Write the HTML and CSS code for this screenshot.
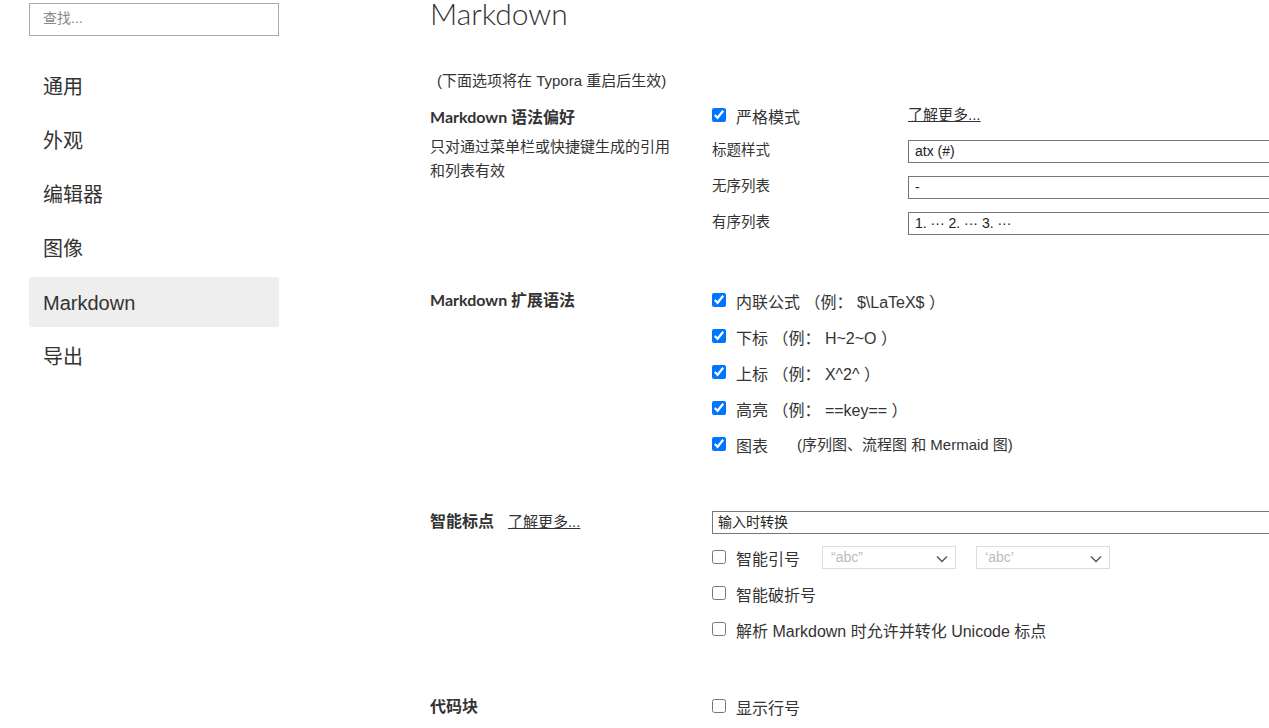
FILE: index.html
```html
<!DOCTYPE html>
<html lang="zh">
<head>
<meta charset="utf-8">
<title>偏好设置</title>
<link rel="stylesheet" href="styles.css">
</head>
<body>
<div class="page">
  <aside class="sidebar">
    <div class="search">查找...</div>
    <nav class="nav">
      <div class="nav-item">通用</div>
      <div class="nav-item">外观</div>
      <div class="nav-item">编辑器</div>
      <div class="nav-item">图像</div>
      <div class="nav-item active">Markdown</div>
      <div class="nav-item">导出</div>
    </nav>
  </aside>
  <main class="main">
    <h1 class="title">Markdown</h1>
    <div class="note">(下面选项将在 Typora 重启后生效)</div>

    <section class="section lead">
      <div class="label-col">
        <div class="sec-label">Markdown 语法偏好</div>
        <div class="sec-desc">只对通过菜单栏或快捷键生成的引用和列表有效</div>
      </div>
      <div class="opt-col">
        <div class="row grid2">
          <label class="check"><input type="checkbox" checked><span>严格模式</span></label>
          <a class="link">了解更多...</a>
        </div>
        <div class="row grid2 small">
          <span class="sub">标题样式</span>
          <div class="field">atx (#)</div>
        </div>
        <div class="row grid2 small">
          <span class="sub">无序列表</span>
          <div class="field">-</div>
        </div>
        <div class="row grid2 small">
          <span class="sub">有序列表</span>
          <div class="field">1. ··· 2. ··· 3. ···</div>
        </div>
      </div>
    </section>

    <section class="section">
      <div class="label-col">
        <div class="sec-label">Markdown 扩展语法</div>
      </div>
      <div class="opt-col">
        <div class="row"><label class="check"><input type="checkbox" checked><span>内联公式 （例： $\LaTeX$ ）</span></label></div>
        <div class="row"><label class="check"><input type="checkbox" checked><span>下标 （例： H~2~O ）</span></label></div>
        <div class="row"><label class="check"><input type="checkbox" checked><span>上标 （例： X^2^ ）</span></label></div>
        <div class="row"><label class="check"><input type="checkbox" checked><span>高亮 （例： ==key== ）</span></label></div>
        <div class="row"><label class="check"><input type="checkbox" checked><span>图表</span></label><span class="hint">(序列图、流程图 和 Mermaid 图)</span></div>
      </div>
    </section>

    <section class="section">
      <div class="label-col">
        <div class="sec-label">智能标点 <a class="link small-link">了解更多...</a></div>
      </div>
      <div class="opt-col">
        <div class="row"><div class="field wide">输入时转换</div></div>
        <div class="row">
          <label class="check"><input type="checkbox"><span>智能引号</span></label>
          <div class="select first">“abc”<svg class="chev" width="12" height="8" viewBox="0 0 12 8"><path d="M1 1.5l5 5 5-5" fill="none" stroke="#555" stroke-width="1.4"/></svg></div>
          <div class="select">‘abc’<svg class="chev" width="12" height="8" viewBox="0 0 12 8"><path d="M1 1.5l5 5 5-5" fill="none" stroke="#555" stroke-width="1.4"/></svg></div>
        </div>
        <div class="row"><label class="check"><input type="checkbox"><span>智能破折号</span></label></div>
        <div class="row"><label class="check"><input type="checkbox"><span>解析 Markdown 时允许并转化 Unicode 标点</span></label></div>
      </div>
    </section>

    <section class="section">
      <div class="label-col">
        <div class="sec-label">代码块</div>
      </div>
      <div class="opt-col">
        <div class="row"><label class="check"><input type="checkbox"><span>显示行号</span></label></div>
      </div>
    </section>
  </main>
</div>
</body>
</html>
```

FILE: styles.css
```css
html, body {
  margin: 0;
  padding: 0;
  background: #fff;
  overflow: hidden;
}
body {
  font-family: "Liberation Sans", "Noto Sans CJK SC", sans-serif;
  color: #333;
}
.page {
  display: flex;
  width: 1700px;
  height: 728px;
  overflow: hidden;
}
.sidebar {
  width: 250px;
  margin-left: 29px;
  padding-top: 3px;
  flex: none;
}
.search {
  height: 31px;
  border: 1px solid #aaa;
  box-sizing: content-box;
  padding-left: 13px;
  font-size: 14px;
  line-height: 29px;
  color: #888;
}
.nav {
  margin-top: 25px;
  display: flex;
  flex-direction: column;
  gap: 4px;
}
.nav-item {
  height: 50px;
  line-height: 52px;
  padding-left: 14px;
  font-size: 20px;
  color: #333;
  border-radius: 3px;
}
.nav-item.active {
  background: #eee;
}
.main {
  margin-left: 151px;
  flex: 1;
}
.title {
  font-family: "Lato", "Noto Sans CJK SC", sans-serif;
  font-weight: 300;
  font-size: 30px;
  line-height: 32px;
  margin: -3px 0 0;
  color: #333;
}
.note {
  margin-top: 41px;
  padding-left: 7px;
  font-size: 15px;
  line-height: 22px;
  color: #333;
}
.section {
  display: grid;
  grid-template-columns: 282px 1fr;
  margin-top: 5px;
}
.section + .section {
  margin-top: 41px;
}
.section.lead .label-col {
  padding-top: 2px;
}
.sec-label {
  font-family: "Lato", "Noto Sans CJK SC", sans-serif;
  font-weight: 700;
  font-size: 16px;
  line-height: 36px;
  color: #333;
}
.sec-desc {
  font-size: 15px;
  line-height: 24px;
  width: 245px;
  color: #333;
}
.opt-col {
  display: flex;
  flex-direction: column;
}
.row {
  height: 36px;
  display: flex;
  align-items: center;
}
.grid2 {
  display: grid;
  grid-template-columns: 196px 1fr;
  align-items: center;
}
.check {
  display: flex;
  align-items: center;
  font-size: 16px;
  color: #333;
}
.check span {
  padding-top: 2px;
}
.check input {
  width: 14px;
  height: 14px;
  margin: 0 10px 0 0;
  accent-color: #0075ff;
}
.sub {
  font-size: 14.5px;
  color: #333;
  margin-top: -6px;
}
.link {
  font-size: 15px;
  color: #333;
  text-decoration: underline;
  margin-top: -4px;
}
.small-link {
  font-family: "Liberation Sans", "Noto Sans CJK SC", sans-serif;
  font-weight: 400;
  font-size: 15px;
  margin-left: 10px;
}
.field {
  width: 400px;
  height: 21px;
  border: 1px solid #767676;
  font-size: 14px;
  line-height: 21px;
  padding-left: 6px;
  color: #222;
}
.field.wide {
  width: 700px;
  padding-left: 5px;
  margin-top: 2px;
}
.hint {
  margin-left: 29px;
  font-size: 15px;
  color: #333;
  margin-top: -2px;
}
.select {
  position: relative;
  width: 124px;
  height: 21px;
  border: 1px solid #ddd;
  padding-left: 8px;
  font-size: 14px;
  line-height: 20px;
  color: #bbb;
  box-sizing: content-box;
  margin-left: 20px;
}
.select.first {
  margin-left: 22px;
}
.chev {
  position: absolute;
  right: 7px;
  top: 8px;
}
```
